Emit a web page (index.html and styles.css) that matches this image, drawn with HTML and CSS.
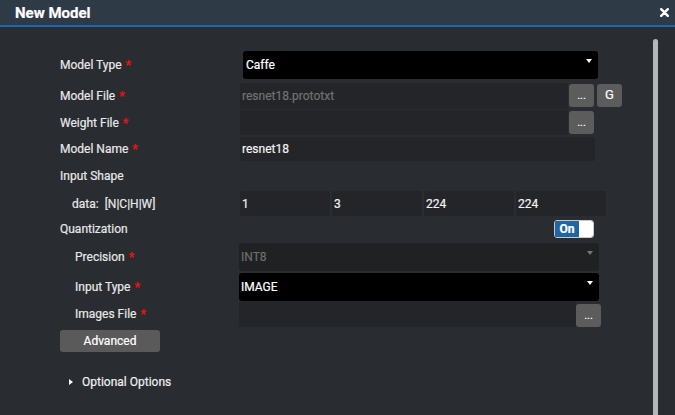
FILE: index.html
```html
<!DOCTYPE html>
<html>
<head>
<meta charset="utf-8">
<title>New Model</title>
<link rel="stylesheet" href="styles.css">
</head>
<body>
<div class="dialog">
  <header class="titlebar">
    <h1 class="title">New Model</h1>
    <span class="close"><svg width="9" height="9" viewBox="0 0 9 9"><path d="M1.2 1.2 L7.8 7.8 M7.8 1.2 L1.2 7.8" stroke="#fff" stroke-width="2.4" stroke-linecap="round"/></svg></span>
  </header>
  <div class="body">
    <div class="form">
      <div class="row r-type">
        <div class="lbl">Model Type <span class="req">*</span></div>
        <div class="select black sel-type"><span>Caffe</span><span class="caret"></span></div>
      </div>
      <div class="row r-file">
        <div class="lbl">Model File <span class="req">*</span></div>
        <div class="input w-file muted">resnet18.prototxt</div>
        <div class="btn dots">...</div>
        <div class="btn g">G</div>
      </div>
      <div class="row r-weight">
        <div class="lbl">Weight File <span class="req">*</span></div>
        <div class="input w-file"></div>
        <div class="btn dots">...</div>
      </div>
      <div class="row r-name">
        <div class="lbl">Model Name <span class="req">*</span></div>
        <div class="input w-name">resnet18</div>
      </div>
      <div class="row r-shape">
        <div class="lbl">Input Shape</div>
      </div>
      <div class="row r-data">
        <div class="lbl data-lbl">data:<span class="dims">[N|C|H|W]</span></div>
        <div class="dims-group">
          <div class="input dim">1</div>
          <div class="input dim">3</div>
          <div class="input dim">224</div>
          <div class="input dim">224</div>
        </div>
      </div>
      <div class="row r-quant">
        <div class="lbl">Quantization</div>
        <div class="toggle"><span class="on">On</span><span class="off"></span></div>
      </div>
      <div class="row r-prec">
        <div class="lbl sub">Precision <span class="req">*</span></div>
        <div class="select dark sel-sub"><span>INT8</span><span class="caret grey"></span></div>
      </div>
      <div class="row r-itype">
        <div class="lbl sub">Input Type <span class="req">*</span></div>
        <div class="select black sel-sub"><span>IMAGE</span><span class="caret"></span></div>
      </div>
      <div class="row r-images">
        <div class="lbl sub">Images File <span class="req">*</span></div>
        <div class="input w-images"></div>
        <div class="btn dots">...</div>
      </div>
      <div class="row r-adv">
        <div class="adv">Advanced</div>
      </div>
      <div class="row r-opt">
        <span class="tri"></span><span class="opt-text">Optional Options</span>
      </div>
    </div>
    <div class="scrollbar"></div>
  </div>
</div>
</body>
</html>
```

FILE: styles.css
```css
* { box-sizing: border-box; }
html, body { margin: 0; padding: 0; }
body {
  width: 675px;
  height: 415px;
  overflow: hidden;
  background: #292c30;
  font-family: "Roboto", "Liberation Sans", sans-serif;
  font-size: 12px;
  color: #e8e8e8;
  -webkit-text-stroke: 0.2px currentColor;
}
.dialog { width: 675px; height: 415px; display: flex; flex-direction: column; }
.titlebar {
  height: 27px;
  flex: none;
  background: #2f3a47;
  border-bottom: 2px solid #1b68b0;
  display: flex;
  align-items: center;
  padding: 0 6px 0 15px;
}
.title {
  margin: 0;
  font-size: 15px;
  font-weight: 700;
  color: #fff;
  flex: 1;
  line-height: 24px;
}
.close { display: flex; width: 9px; height: 9px; margin-bottom: 1px; }
.body { flex: 1; display: flex; background: #292c30; }
.form {
  flex: 1;
  display: flex;
  flex-direction: column;
  padding: 24px 0 0 60px;
}
.scrollbar {
  width: 5px;
  margin: 12px 17px 0 0;
  background: #b4b6be;
  border-radius: 3px 3px 0 0;
}
.row { display: flex; align-items: center; flex: none; }
.lbl { width: 180px; flex: none; color: #e8e8e8; white-space: nowrap; }
.lbl.sub { padding-left: 15px; }
.req { color: #ee1111; font-weight: 700; margin-left: 1px; }
.data-lbl { padding-left: 12px; }
.dims { margin-left: 6px; }

.r-type { height: 28px; }
.r-file { height: 26px; margin-top: 4px; }
.r-weight { height: 25px; margin-top: 1px; }
.r-name { height: 24px; margin-top: 2px; }
.r-shape { height: 30px; }
.r-data { height: 25px; }
.r-quant { height: 25px; }
.r-prec { height: 28px; margin-top: 2px; }
.r-itype { height: 28px; margin-top: 2px; }
.r-images { height: 26px; }
.r-adv { height: 22px; margin-top: 3px; }
.r-opt { height: 24px; margin-top: 18px; padding-left: 9px; }

.select {
  height: 100%;
  border-radius: 3px;
  display: flex;
  align-items: center;
  padding: 0 6px 0 3px;
}
.select.black { background: #000; color: #fff; }
.select.dark { background: #1f2123; color: #6e6e6e; }
.sel-type { width: 355px; margin-left: 3px; }
.sel-sub { width: 360px; margin-left: -1px; padding-left: 2px; }
.caret {
  margin-left: auto;
  align-self: flex-start;
  margin-top: 8px;
  width: 0; height: 0;
  border-left: 3.5px solid transparent;
  border-right: 3.5px solid transparent;
  border-top: 4px solid #fff;
}
.caret.grey { border-top-color: #777; }

.input {
  height: 100%;
  background: #232528;
  border-radius: 3px;
  display: flex;
  align-items: center;
  padding-left: 2px;
  color: #f2f2f2;
}
.input.muted { color: #727272; }
.w-file { width: 328px; }
.w-name { width: 355px; }
.w-images { width: 337px; margin-left: -1px; border-radius: 3px 0 0 3px; }
.dims-group { display: flex; gap: 2px; height: 100%; }
.dim { width: 90px; }

.btn {
  height: 23px;
  width: 25px;
  background: #5c5c5c;
  border-radius: 3px;
  color: #fff;
  display: flex;
  align-items: center;
  justify-content: center;
  align-self: flex-start;
  margin-top: 1px;
  flex: none;
}
.dots { margin-left: 1px; font-size: 11px; }
.g { margin-left: 3px; font-size: 13px; font-weight: 400; padding-bottom: 2px; }
.r-images .btn { margin-top: 3px; margin-left: 0; }

.toggle {
  margin-left: 314px;
  width: 40px;
  height: 18px;
  border: 1px solid #c8c8c8;
  border-radius: 3px;
  display: flex;
  overflow: hidden;
}
.on {
  width: 24px;
  background: #1e67a3;
  color: #fff;
  font-weight: 700;
  font-size: 12px;
  display: flex;
  align-items: center;
  justify-content: center;
}
.off { flex: 1; background: #fff; }

.adv {
  width: 100px;
  height: 22px;
  background: #5a5a5a;
  border-radius: 3px;
  display: flex;
  align-items: center;
  justify-content: center;
  color: #fff;
}
.tri {
  width: 0; height: 0;
  border-top: 3.5px solid transparent;
  border-bottom: 3.5px solid transparent;
  border-left: 4px solid #fff;
}
.opt-text { margin-left: 9px; color: #f0f0f0; }
```
